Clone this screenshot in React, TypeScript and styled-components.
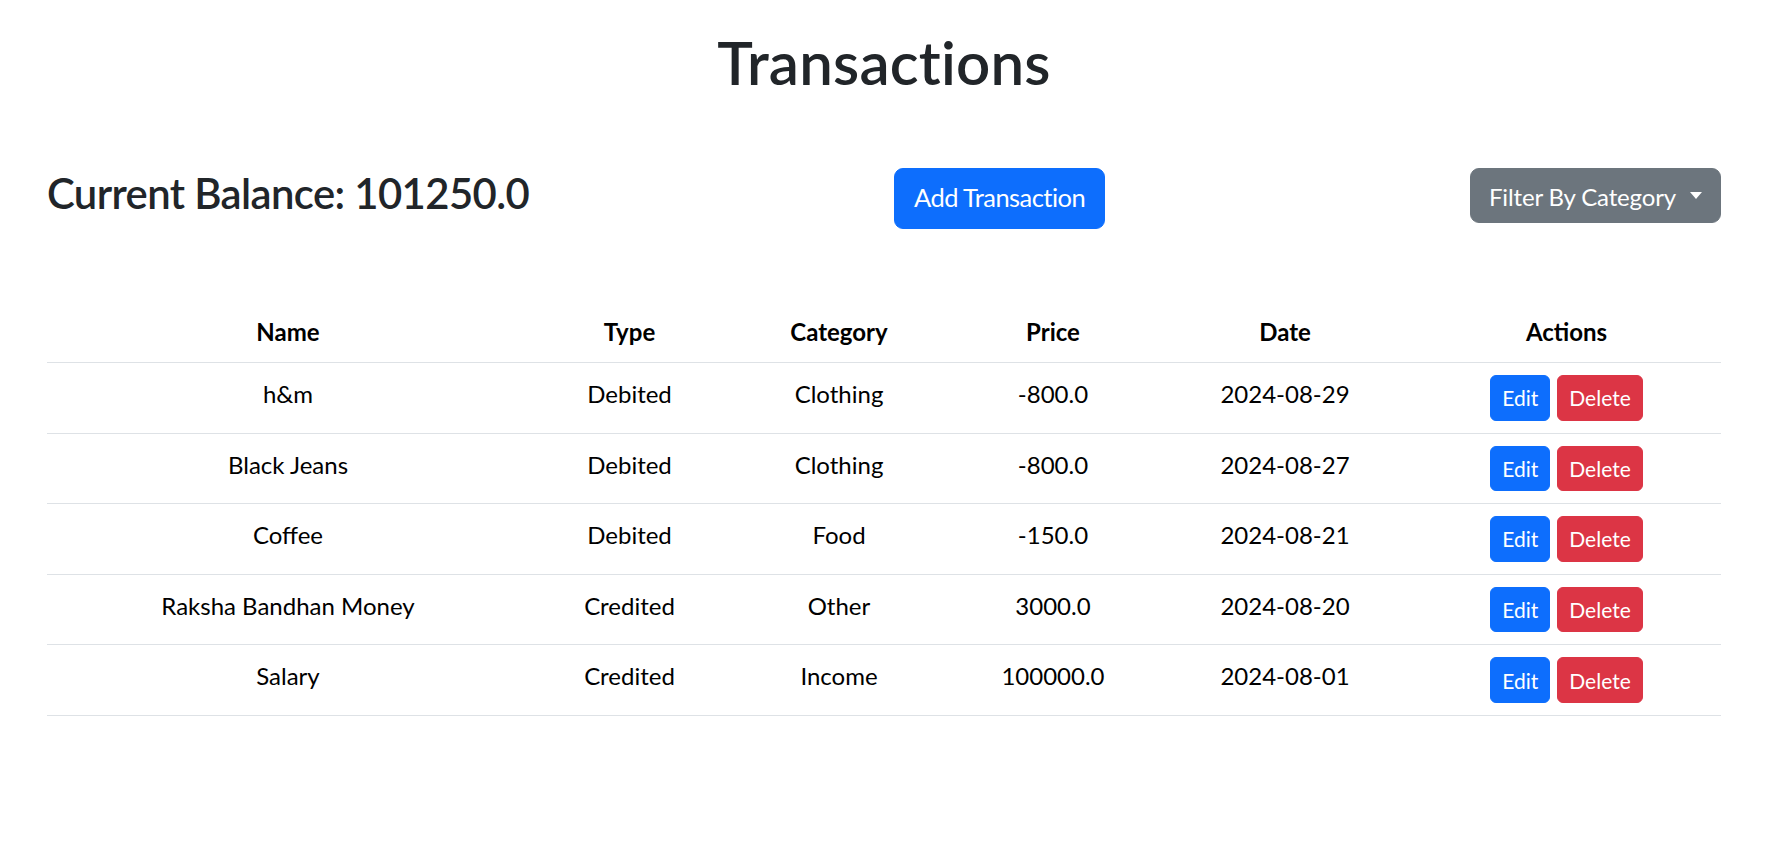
import React from 'react';
import styled, { createGlobalStyle, css } from 'styled-components';

const GlobalStyle = createGlobalStyle`
  *, *::before, *::after { box-sizing: border-box; }
  html, body { margin: 0; padding: 0; background: #ffffff; }
  body {
    font-family: Lato, "Noto Sans", "Liberation Sans", sans-serif;
    font-size: 24px;
    line-height: 1.5;
    color: #212529;
  }
`;

const Page = styled.div`
  padding: 26px 64px 0 47px;
`;

const Title = styled.h1`
  margin: 0 0 70px;
  font-size: 60px;
  line-height: 72px;
  font-weight: 600;
  letter-spacing: 0.2px;
  text-align: center;
  color: #212529;
`;

const BalanceRow = styled.div`
  display: flex;
  justify-content: space-between;
  align-items: flex-start;
  margin-bottom: 73px;
`;

const Balance = styled.h3`
  margin: 0;
  font-size: 41.8px;
  line-height: 1.2;
  font-weight: 600;
  letter-spacing: -0.6px;
  color: #212529;
`;

type Variant = 'primary' | 'secondary' | 'danger';

const palette: Record<Variant, string> = {
  primary: '#0d6efd',
  secondary: '#6c757d',
  danger: '#dc3545',
};

const BaseButton = styled.button<{ $variant: Variant }>`
  display: inline-flex;
  align-items: center;
  justify-content: center;
  font-family: inherit;
  font-weight: 400;
  color: #ffffff;
  white-space: nowrap;
  cursor: pointer;
  ${({ $variant }) => css`
    background: ${palette[$variant]};
    border: 1.5px solid ${palette[$variant]};
  `}
`;

const AddButton = styled(BaseButton)`
  height: 61px;
  padding: 0 19px 2px;
  font-size: 25.5px;
  letter-spacing: -0.55px;
  line-height: 1.5;
  border-radius: 9px;
`;

const DropdownButton = styled(BaseButton)`
  height: 55px;
  padding: 3px 18px 0;
  font-size: 24px;
  letter-spacing: -0.15px;
  line-height: 1.5;
  border-radius: 9px;

  &::after {
    content: '';
    display: inline-block;
    margin-left: 14px;
    border-top: 7px solid #ffffff;
    border-left: 6.5px solid transparent;
    border-right: 6.5px solid transparent;
    transform: translateY(-2px);
  }
`;

const SmallButton = styled(BaseButton)`
  height: 45.6px;
  padding: 0 11px;
  font-size: 21px;
  line-height: 1;
  border-radius: 6px;
`;

const Table = styled.table`
  width: 100%;
  border-collapse: collapse;
  table-layout: fixed;
  color: #000000;
`;

const cellBase = css`
  padding: 12px;
  text-align: center;
  vertical-align: top;
  line-height: 36px;
  border-bottom: 1px solid #dee2e6;
`;

const HeadCell = styled.th`
  ${cellBase}
  font-weight: 700;
`;

const Cell = styled.td`
  ${cellBase}
  font-weight: 400;
  padding-top: 13px;
`;

const Actions = styled.div`
  display: flex;
  justify-content: center;
  gap: 7px;
  margin-top: -1px;
`;

const columns = [
  { label: 'Name', width: 482 },
  { label: 'Type', width: 201 },
  { label: 'Category', width: 218 },
  { label: 'Price', width: 210 },
  { label: 'Date', width: 254 },
  { label: 'Actions', width: 309 },
];

const transactions = [
  { name: 'h&m', type: 'Debited', category: 'Clothing', price: '-800.0', date: '2024-08-29' },
  { name: 'Black Jeans', type: 'Debited', category: 'Clothing', price: '-800.0', date: '2024-08-27' },
  { name: 'Coffee', type: 'Debited', category: 'Food', price: '-150.0', date: '2024-08-21' },
  { name: 'Raksha Bandhan Money', type: 'Credited', category: 'Other', price: '3000.0', date: '2024-08-20' },
  { name: 'Salary', type: 'Credited', category: 'Income', price: '100000.0', date: '2024-08-01' },
];

export default function App() {
  return (
    <>
      <GlobalStyle />
      <Page>
        <Title>Transactions</Title>
        <BalanceRow>
          <Balance>Current Balance: 101250.0</Balance>
          <AddButton $variant="primary">Add Transaction</AddButton>
          <DropdownButton $variant="secondary">Filter By Category</DropdownButton>
        </BalanceRow>
        <Table>
          <colgroup>
            {columns.map((c) => (
              <col key={c.label} style={{ width: c.width }} />
            ))}
          </colgroup>
          <thead>
            <tr>
              {columns.map((c) => (
                <HeadCell key={c.label}>{c.label}</HeadCell>
              ))}
            </tr>
          </thead>
          <tbody>
            {transactions.map((t) => (
              <tr key={t.name}>
                <Cell>{t.name}</Cell>
                <Cell>{t.type}</Cell>
                <Cell>{t.category}</Cell>
                <Cell>{t.price}</Cell>
                <Cell>{t.date}</Cell>
                <Cell>
                  <Actions>
                    <SmallButton $variant="primary">Edit</SmallButton>
                    <SmallButton $variant="danger">Delete</SmallButton>
                  </Actions>
                </Cell>
              </tr>
            ))}
          </tbody>
        </Table>
      </Page>
    </>
  );
}
